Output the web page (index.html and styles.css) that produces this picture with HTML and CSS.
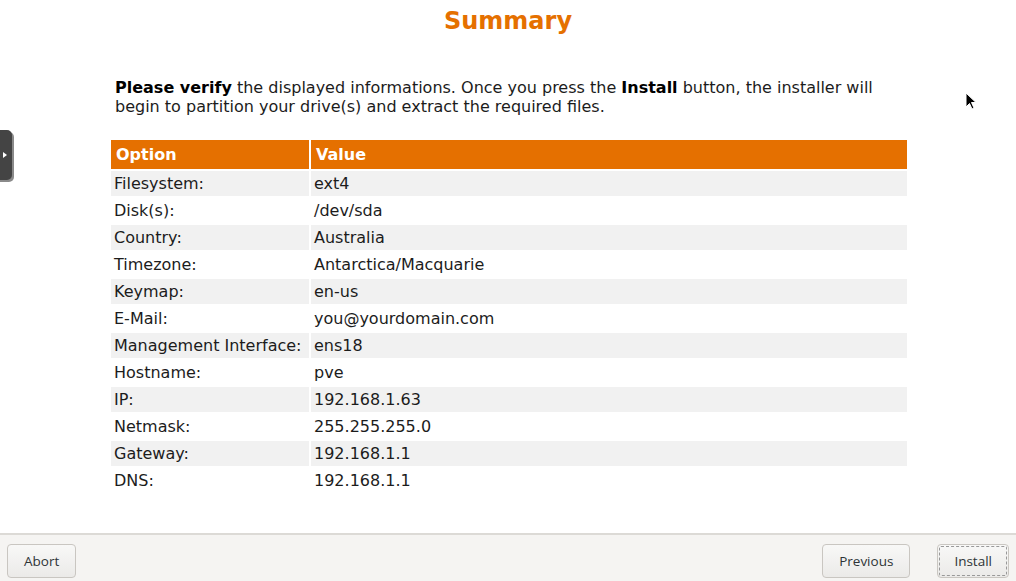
FILE: index.html
```html
<html>

<head>
  <title>Summary</title>
  <link rel="stylesheet" href="styles.css">
</head>

<body>
  <div id="page">
    <div id="content">
      <h1>Summary</h1>
      <p class="intro"><b>Please verify</b> the displayed informations. Once you press the <b>Install</b> button, the installer will begin to partition your drive(s) and extract the required files.</p>
      <table class="summary">
        <tr><th class="opt">Option</th><th>Value</th></tr>
        <tr><td>Filesystem:</td><td>ext4</td></tr>
        <tr><td>Disk(s):</td><td>/dev/sda</td></tr>
        <tr><td>Country:</td><td>Australia</td></tr>
        <tr><td>Timezone:</td><td>Antarctica/Macquarie</td></tr>
        <tr><td>Keymap:</td><td>en-us</td></tr>
        <tr><td>E-Mail:</td><td>you@yourdomain.com</td></tr>
        <tr><td>Management Interface:</td><td>ens18</td></tr>
        <tr><td>Hostname:</td><td>pve</td></tr>
        <tr><td>IP:</td><td>192.168.1.63</td></tr>
        <tr><td>Netmask:</td><td>255.255.255.0</td></tr>
        <tr><td>Gateway:</td><td>192.168.1.1</td></tr>
        <tr><td>DNS:</td><td>192.168.1.1</td></tr>
      </table>
    </div>
    <div id="footer">
      <button class="btn">Abort</button>
      <div class="spacer"></div>
      <button class="btn">Previous</button>
      <button class="btn focused">Install</button>
    </div>
  </div>

  <div id="sidetab"><span class="arrow"></span></div>

  <svg id="cursor" width="14" height="20" viewBox="0 0 14 20">
    <path d="M1 1 L1 15 L4.5 11.5 L7 17 L9 16 L6.5 10.5 L11 10.5 Z" fill="#000" stroke="#fff" stroke-width="1"/>
  </svg>
</body>

</html>
```
FILE: styles.css
```css
body {
  margin: 0;
  font-family: 'DejaVu Sans', sans-serif;
  color: #1c1c1c;
  background: #fff;
}

#page {
  height: 581px;
  display: flex;
  flex-direction: column;
}

#content {
  flex: 1;
}

h1 {
  margin: 0;
  padding-top: 6px;
  text-align: center;
  color: #e57000;
  font-size: 24px;
  line-height: 30px;
}

.intro {
  margin: 42px 0 0 115px;
  width: 765px;
  font-size: 16px;
  line-height: 19px;
}

.intro b {
  color: #000;
}

.summary {
  margin: 22px 0 0 109px;
  width: 800px;
  border-spacing: 2px;
  font-size: 16px;
}

.summary th {
  background: #e57000;
  color: #fff;
  text-align: left;
  height: 29px;
  padding: 0 5px;
  font-size: 16px;
}

.summary th.opt {
  width: 188px;
}

.summary td {
  height: 25px;
  padding: 0 3px;
}

.summary tr:nth-child(even) td {
  background: #f1f1f1;
}

#footer {
  height: 48px;
  border-top: 2px solid #dcdad6;
  background: #f5f4f2;
  display: flex;
  align-items: flex-end;
  padding: 0 7px 3px;
  box-sizing: border-box;
  gap: 27px;
}

.spacer {
  flex: 1;
}

.btn {
  font-family: 'Open Sans', sans-serif;
  font-size: 13.5px;
  color: #2e3436;
  height: 34px;
  padding: 0 16px;
  border: 1px solid #c9c6c1;
  border-radius: 4px;
  background: linear-gradient(#f8f8f7, #ebeae8);
}

.btn.focused {
  outline: 1px dashed #999;
  outline-offset: -3px;
}

#sidetab {
  position: absolute;
  left: -6px;
  top: 130px;
  width: 18px;
  height: 50px;
  background: #444;
  border-radius: 5px;
  box-shadow: 2px 2px 0 #8a8a8a;
}

#sidetab .arrow {
  position: absolute;
  left: 9px;
  top: 22px;
  border-left: 4px solid #fff;
  border-top: 3px solid transparent;
  border-bottom: 3px solid transparent;
}

#cursor {
  position: absolute;
  left: 965px;
  top: 92px;
}
```
